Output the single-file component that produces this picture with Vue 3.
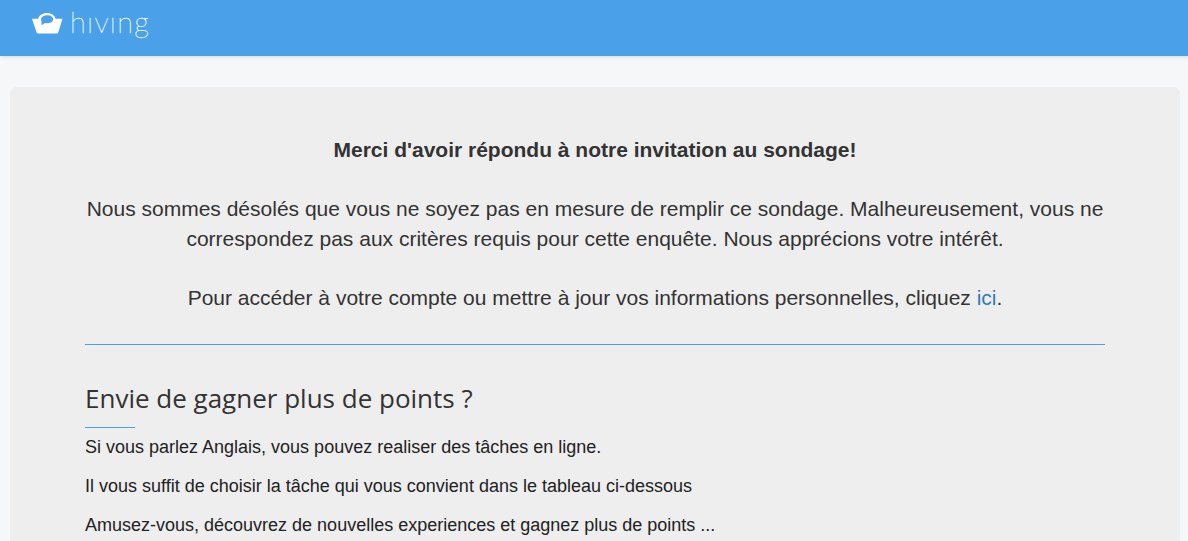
<template>
  <div class="page">
    <header class="topbar">
      <a class="logo" href="#" aria-label="hiving">
        <svg class="logo-icon" width="31" height="21" viewBox="0 0 31 21">
          <path fill="#fff" fill-rule="evenodd" d="M0 5.8 H6.2 C6.8 2.4 10.4 0 15 0 C19.6 0 22.8 2.4 23.6 5.8 H30.5 L26.4 19 Q26 20.5 24.4 20.5 H6.4 Q4.8 20.5 4.4 19 Z M9.4 8 L9.6 12.2 L13 10 C14 10.3 15.6 10.4 17 10.1 C19.8 9.5 21.4 7.9 21.2 6 C21 3.8 18.2 2.2 15.2 2.2 C11.2 2.2 7.8 4.8 9.4 8 Z" />
        </svg>
        <span class="logo-text">hıvıng</span>
      </a>
    </header>

    <main class="card">
      <section class="intro">
        <p class="thanks">Merci d'avoir répondu à notre invitation au sondage!</p>
        <p>Nous sommes désolés que vous ne soyez pas en mesure de remplir ce sondage. Malheureusement, vous ne correspondez pas aux critères requis pour cette enquête. Nous apprécions votre intérêt.</p>
        <p>Pour accéder à votre compte ou mettre à jour vos informations personnelles, cliquez <a href="#">ici</a>.</p>
      </section>

      <section class="more">
        <h2>Envie de gagner plus de points ?</h2>
        <p>Si vous parlez Anglais, vous pouvez realiser des tâches en ligne.</p>
        <p>Il vous suffit de choisir la tâche qui vous convient dans le tableau ci-dessous</p>
        <p>Amusez-vous, découvrez de nouvelles experiences et gagnez plus de points ...</p>
      </section>
    </main>
  </div>
</template>

<script setup>
</script>

<style>
html, body {
  margin: 0;
  height: 541px;
  overflow: hidden;
  background: #f6f7f9;
}
</style>

<style scoped>
.page {
  font-family: "Liberation Sans", Arial, sans-serif;
  color: #333;
  height: 541px;
  overflow: hidden;
}

.topbar {
  height: 56px;
  background: #4aa1ea;
  box-shadow: 0 1px 4px rgba(0, 0, 0, .12);
  padding-left: 32px;
}

.logo {
  display: inline-flex;
  align-items: flex-start;
  gap: 7px;
  padding-top: 13px;
  color: #fff;
  text-decoration: none;
}

.logo-text {
  font-family: Lato, sans-serif;
  font-weight: 100;
  font-size: 29px;
  line-height: 28px;
  letter-spacing: 1.3px;
  margin-top: -5px;
  -webkit-text-stroke: .3px #fff;
}

.card {
  margin: 31px 8px 0 10px;
  padding: 48px 75px 0;
  background: #eee;
  border-radius: 6px;
  height: 500px;
}

.intro {
  text-align: center;
  font-size: 21px;
  line-height: 29.5px;
  padding-bottom: 32px;
  border-bottom: 1px solid #4aa1ea;
}

.intro p {
  margin: 0 0 29.5px;
}

.intro p:last-child {
  margin: 0;
}

.thanks {
  font-weight: 700;
}

.intro a {
  color: #337ab7;
  text-decoration: none;
}

.more {
  padding-top: 35px;
}

.more h2 {
  margin: 0 0 6px;
  font-family: "Open Sans", sans-serif;
  font-weight: 400;
  font-size: 26px;
  line-height: 36px;
  padding-bottom: 12px;
  position: relative;
}

.more h2::after {
  content: "";
  position: absolute;
  left: 0;
  bottom: 0;
  width: 50px;
  height: 1px;
  background: #4aa1ea;
}

.more p {
  margin: 0 0 13px;
  font-size: 18px;
  line-height: 26px;
  color: #222;
}
</style>
